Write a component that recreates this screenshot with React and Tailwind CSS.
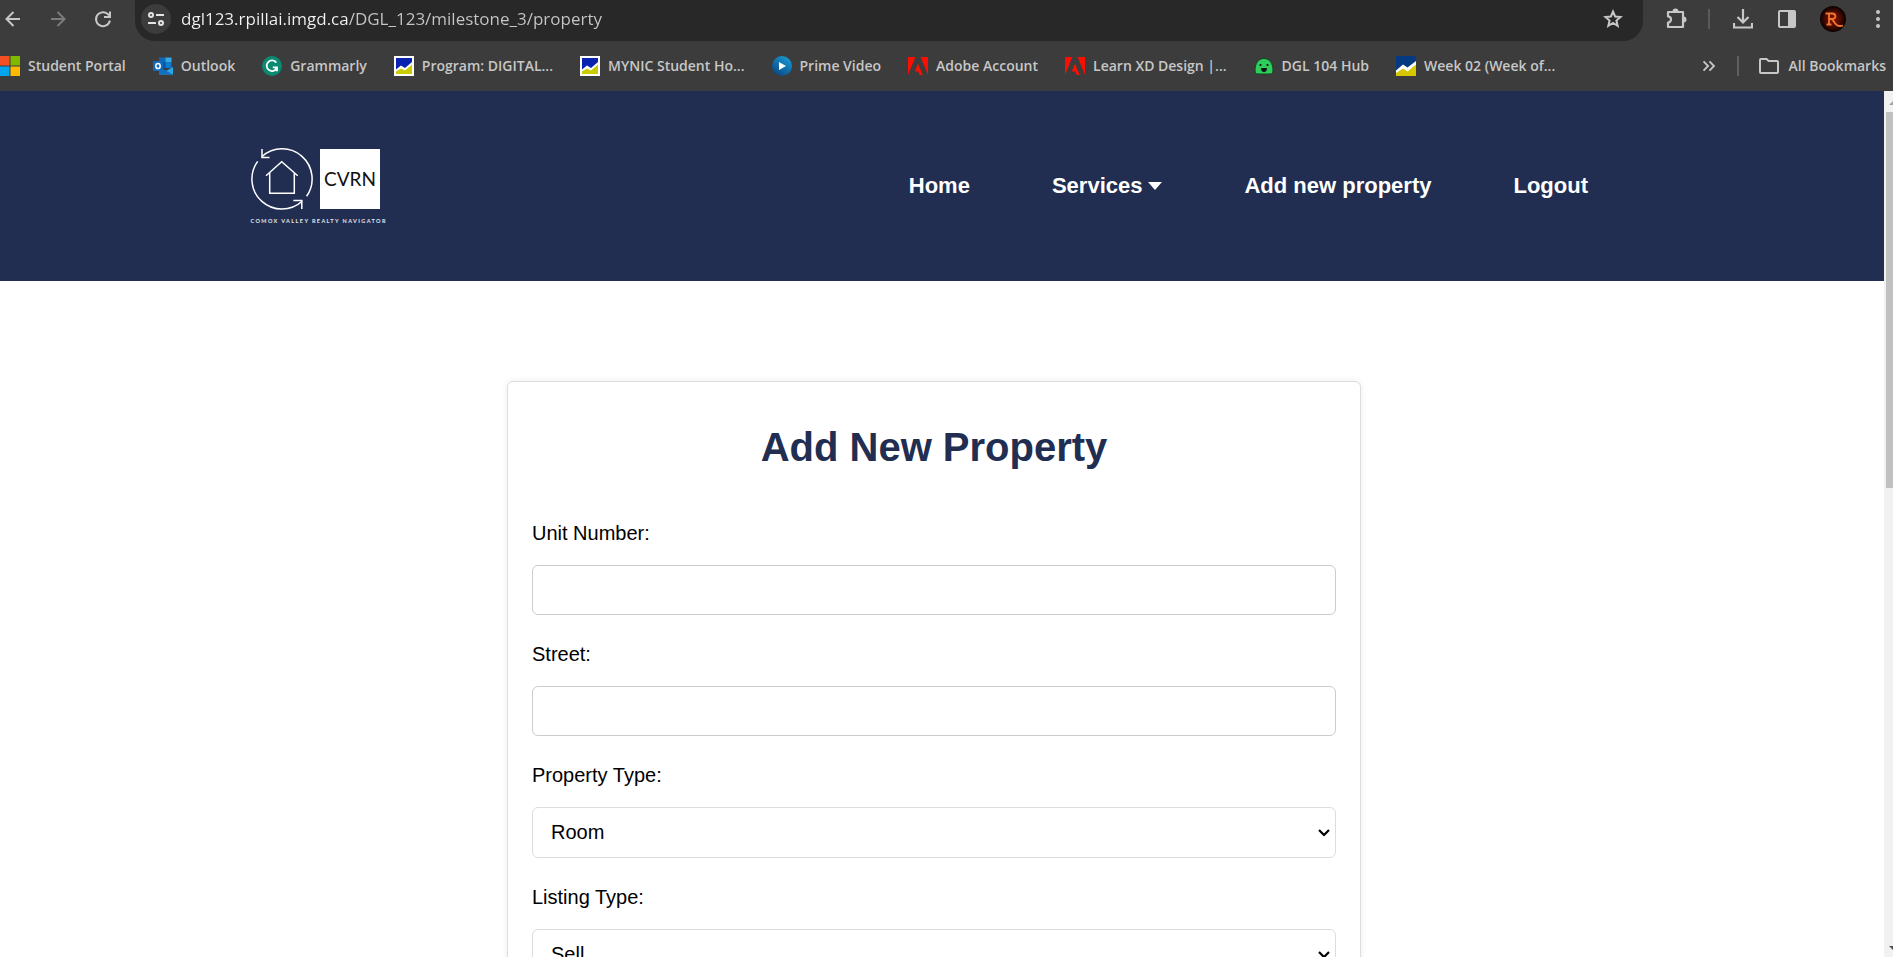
import { MdOutlineFolder } from "react-icons/md";

function MicrosoftIcon() {
  return (
    <svg viewBox="0 0 20 20" className="size-5">
      <path fill="#f25022" d="M0 0h9.5v9.5H0z" />
      <path fill="#7fba00" d="M10.5 0H20v9.5h-9.5z" />
      <path fill="#00a4ef" d="M0 10.5h9.5V20H0z" />
      <path fill="#ffb900" d="M10.5 10.5H20V20h-9.5z" />
    </svg>
  );
}

function OutlookIcon() {
  return (
    <svg viewBox="0 0 20 20" className="size-5">
      <path fill="#1066b5" d="M6 1.500h6.500v8H6z" />
      <path fill="#32a9e7" d="M12.500 1.500h6v5h-6z" />
      <path fill="#0358a7" d="M6 6h6.500v6H6z" />
      <path fill="#0a7bd0" d="M12.500 6.500h6V12h-6z" />
      <path fill="#28a8ea" d="M6 11l7 4 7-4v7.500H6z" />
      <path fill="#1270c4" d="M6 11l14 7.500H6z" />
      <rect y="5" width="10" height="10" rx="1" fill="#0f6cbd" />
      <ellipse cx="5" cy="10" rx="2.2" ry="2.6" fill="none" stroke="#fff" strokeWidth="1.5" />
    </svg>
  );
}

function GrammarlyIcon() {
  return (
    <svg viewBox="0 0 20 20" className="size-5">
      <circle cx="10" cy="10" r="10" fill="#0b8a72" />
      <path d="M14.300 6.600A5.300 5.300 0 1 0 14.800 12M10.800 11.300H15v4" fill="none" stroke="#fff" strokeWidth="1.8" />
    </svg>
  );
}

function CollegeIcon() {
  return (
    <svg viewBox="0 0 20 20" className="size-5">
      <path fill="#fff" d="M0 0h20v20H0z" />
      <path fill="#0a22b0" d="M2 2h16v4l-7 6-4-2.500-5 4z" />
      <path fill="#c8cc00" d="M2 15.500l5-3 4 2 7-6V18H2z" />
    </svg>
  );
}

function CourseIcon() {
  return (
    <svg viewBox="0 0 20 20" className="size-5">
      <path fill="#fff" d="M0 0h20v20H0z" />
      <path fill="#063a80" d="M0 0h20v5l-8.500 6.500L7 8.500l-7 6z" />
      <path fill="#d6c800" d="M0 17l7-4.500 4.500 3L20 8.500V20H0z" />
    </svg>
  );
}

function PrimeIcon() {
  return (
    <svg viewBox="0 0 20 20" className="size-5">
      <defs>
        <linearGradient id="prime" x1="1" y1="0" x2="0.300" y2="1">
          <stop offset="0" stopColor="#1ba3dc" />
          <stop offset="1" stopColor="#0b4a86" />
        </linearGradient>
      </defs>
      <circle cx="10" cy="10" r="10" fill="url(#prime)" />
      <path fill="#fff" d="M7 6l7 4-7 4z" />
    </svg>
  );
}

function AdobeIcon() {
  return (
    <svg viewBox="0 0 20 20" className="size-5">
      <path fill="#fa0f00" d="M0 1h7.400L0 19zM12.600 1H20v18zM10 7.600L14.700 19h-3.100l-1.400-3.600H6.800z" />
    </svg>
  );
}

function BlobIcon() {
  return (
    <svg viewBox="0 0 20 20" className="size-5">
      <path fill="#2ecc5a" stroke="#12431f" d="M1 14c0-6 3-11.500 9-11.500S19 8 19 14c0 3-1 4-3 4H4c-2 0-3-1-3-4z" />
      <circle cx="6.500" cy="9" r="1.100" fill="#111" />
      <circle cx="13.500" cy="9" r="1.100" fill="#111" />
      <path fill="#111" d="M7 12h6c0 2.800-1 4-3 4s-3-1.200-3-4z" />
    </svg>
  );
}

function LineIcon({ d, className = "size-[22px]" }) {
  return (
    <svg viewBox="0 0 22 22" className={className} fill="none" stroke="currentColor" strokeWidth="2">
      <path d={d} />
    </svg>
  );
}

function SiteSettingsIcon() {
  return (
    <svg viewBox="0 0 16 16" className="size-4" fill="none" stroke="#e3e3e3" strokeWidth="2">
      <circle cx="3" cy="4" r="2" />
      <path d="M8 4h8M0 12h8" />
      <circle cx="13" cy="12" r="2" />
    </svg>
  );
}

function StarIcon() {
  return (
    <svg viewBox="0 0 24 24" className="size-6" fill="none" stroke="currentColor" strokeWidth="2">
      <path d="M12 4.500l2.100 5 5.400.5-4.100 3.500 1.300 5.300L12 16l-4.700 2.800 1.300-5.300L4.500 10l5.400-.5z" />
    </svg>
  );
}

function ExtensionsIcon() {
  return (
    <svg viewBox="0 0 24 24" className="size-6">
      <path
        d="M4 5h15v15H4v-4.500a3 3 0 0 0 0-6z"
        fill="none"
        stroke="currentColor"
        strokeWidth="2.200"
        strokeLinejoin="round"
      />
      <path d="M8.500 4.500a3 3 0 0 1 6 0zM19.500 9.500a3 3 0 0 1 0 6z" fill="currentColor" />
    </svg>
  );
}

function DownloadIcon() {
  return (
    <svg viewBox="0 0 20 20" className="size-5" fill="none" stroke="currentColor" strokeWidth="2.200">
      <path d="M10 0v13M4.500 8l5.500 5.500L15.500 8M1 14v4.500h18V14" />
    </svg>
  );
}

function SidePanelIcon() {
  return (
    <svg viewBox="0 0 20 20" className="size-5">
      <rect x="2" y="2" width="16" height="16" rx="1" fill="none" stroke="currentColor" strokeWidth="2" />
      <path fill="currentColor" d="M11 2h7v16h-7z" />
    </svg>
  );
}

function ProfileIcon() {
  return (
    <svg viewBox="0 0 26 26" className="size-[26px]">
      <defs>
        <radialGradient id="ember">
          <stop offset="0" stopColor="#8a1500" />
          <stop offset="0.600" stopColor="#4a0a00" />
          <stop offset="1" stopColor="#080100" />
        </radialGradient>
      </defs>
      <circle cx="13" cy="13" r="13" fill="url(#ember)" />
      <path d="M5.500 7.500H12c4.500 0 4.500 5.500 0 5.500H9M9 7.500v11M6.500 18.500h5M12 13c3 4.500 5 8.500 11 6.500" fill="none" stroke="#f2762e" strokeWidth="1.800" />
    </svg>
  );
}

function MenuDotsIcon() {
  return (
    <svg viewBox="0 0 24 24" className="size-6" fill="currentColor">
      <circle cx="12" cy="5" r="2" />
      <circle cx="12" cy="12" r="2" />
      <circle cx="12" cy="19" r="2" />
    </svg>
  );
}

const bookmarks = [
  { label: "Student Portal", Icon: MicrosoftIcon },
  { label: "Outlook", Icon: OutlookIcon },
  { label: "Grammarly", Icon: GrammarlyIcon },
  { label: "Program: DIGITAL...", Icon: CollegeIcon },
  { label: "MYNIC Student Ho...", Icon: CollegeIcon },
  { label: "Prime Video", Icon: PrimeIcon },
  { label: "Adobe Account", Icon: AdobeIcon },
  { label: "Learn XD Design |...", Icon: AdobeIcon },
  { label: "DGL 104 Hub", Icon: BlobIcon },
  { label: "Week 02 (Week of...", Icon: CourseIcon },
];

function BrowserBar() {
  return (
    <div className="shrink-0 bg-[#3c3c3c] font-['Open_Sans',sans-serif] text-[#c7c7c7]">
      <div className="flex h-[41px] items-center">
        <div className="flex w-[135px] shrink-0 items-center gap-[23px] pb-1 pl-0.5">
          <button aria-label="Back"><LineIcon d="M18 11H4.500M11.500 4l-7 7 7 7" /></button>
          <button aria-label="Forward" className="text-[#7c7c7c]"><LineIcon d="M4 11h13.500M10.500 4l7 7-7 7" /></button>
          <button aria-label="Reload"><LineIcon d="M17 7.500A7 7 0 1 0 17.900 12.500M18 3.500v5.500h-6" /></button>
        </div>
        <div className="flex h-full flex-1 items-center rounded-b-[20px] bg-[#282828] pr-[18px] pb-1 pl-1.5">
          <button aria-label="Site information" className="flex size-[30px] items-center justify-center rounded-full bg-[#3c3c3c]">
            <SiteSettingsIcon />
          </button>
          <input
            type="text"
            aria-label="Address"
            defaultValue="dgl123.rpillai.imgd.ca/DGL_123/milestone_3/property"
            className="ml-2.5 min-w-0 flex-1 bg-[linear-gradient(90deg,#f4f4f4_167px,#c7c7c7_167px)] bg-clip-text text-[17px] leading-6 text-transparent caret-white outline-none"
          />
          <button aria-label="Bookmark this page"><StarIcon /></button>
        </div>
        <div className="flex w-[250px] shrink-0 items-center pb-1 pl-[21px]">
          <button aria-label="Extensions"><ExtensionsIcon /></button>
          <span className="ml-5 h-5 w-0.5 bg-[#5a5a5a]" />
          <button aria-label="Downloads" className="ml-[23px]"><DownloadIcon /></button>
          <button aria-label="Side panel" className="ml-6"><SidePanelIcon /></button>
          <button aria-label="Profile" className="ml-[23px]"><ProfileIcon /></button>
          <button aria-label="Menu" className="ml-5"><MenuDotsIcon /></button>
        </div>
      </div>
      <div className="flex h-[50px] items-center text-sm font-semibold">
        <nav aria-label="Bookmarks" className="flex items-center gap-[27px]">
          {bookmarks.map(({ label, Icon }) => (
            <a key={label} href="#" className="flex items-center gap-2 whitespace-nowrap">
              <Icon />
              {label}
            </a>
          ))}
        </nav>
        <div className="ml-auto flex items-center pr-[7px]">
          <button aria-label="More bookmarks">
            <LineIcon className="size-5" d="M5 6l5 5-5 5M11.500 6l5 5-5 5" />
          </button>
          <span className="ml-[18px] h-5 w-0.5 bg-[#5f5f5f]" />
          <a href="#" className="ml-[18px] flex items-center gap-2 whitespace-nowrap">
            <MdOutlineFolder className="size-6" />
            All Bookmarks
          </a>
        </div>
      </div>
    </div>
  );
}

function Logo() {
  return (
    <a href="#" aria-label="Comox Valley Realty Navigator">
      <svg viewBox="0 0 140 80" className="h-20 w-[140px]">
        <g fill="none" stroke="#fff" strokeWidth="1.500">
          <path d="M8.700 15.400A30 30 0 0 0 53.100 55.300M12.900 10.700A30 30 0 0 1 57.600 50.200" />
          <path d="M13 3v8.500h7.500M44.300 54.500h8.500V63" />
          <path d="M17 29.700l15.700-14 16 14M20.700 27v20.300h24.600V27" />
        </g>
        <rect x="71" y="3" width="60" height="60" fill="#fff" />
        <text x="101" y="40" textAnchor="middle" fontSize="19" fontFamily="Lato, sans-serif" fill="#111">CVRN</text>
        <text x="1.500" y="77" fontSize="5.500" letterSpacing="1.400" fontWeight="700" fontFamily="Lato, sans-serif" fill="#e4e6ec">COMOX VALLEY REALTY NAVIGATOR</text>
      </svg>
    </a>
  );
}

function SiteHeader() {
  return (
    <header className="flex h-[190px] items-center justify-between bg-[#212e52] pr-[296px] pl-[249px]">
      <Logo />
      <nav aria-label="Main" className="flex items-center gap-[82px] text-[22px] leading-6 font-bold text-white">
        <a href="#">Home</a>
        <a href="#" className="flex items-center gap-1.5">
          Services
          <svg viewBox="0 0 14 8" className="h-2 w-3.5"><path d="M0 0h14L7 8z" fill="currentColor" /></svg>
        </a>
        <a href="#">Add new property</a>
        <a href="#">Logout</a>
      </nav>
    </header>
  );
}

function TextField({ id, label }) {
  return (
    <div className="mb-[26px]">
      <label htmlFor={id} className="mb-[18px] block">{label}</label>
      <input id={id} type="text" className="block h-[50px] w-full rounded-md border border-[#ccc] px-[18px]" />
    </div>
  );
}

function SelectField({ id, label, options }) {
  return (
    <div className="mb-[26px]">
      <label htmlFor={id} className="mb-[18px] block">{label}</label>
      <div className="relative">
        <select id={id} className="block h-[51px] w-full appearance-none rounded-md border border-[#ddd] bg-white px-[18px]">
          {options.map((option) => (
            <option key={option}>{option}</option>
          ))}
        </select>
        <svg viewBox="0 0 12 8" className="pointer-events-none absolute top-[22px] right-1.5 h-2 w-3">
          <path d="M1 1l5 5 5-5" fill="none" stroke="#000" strokeWidth="2.200" />
        </svg>
      </div>
    </div>
  );
}

function PropertyForm() {
  return (
    <form className="mx-auto w-[854px] max-w-full rounded-md border border-[#ddd] bg-white px-6 pt-[41px] pb-6 shadow-[0_0_6px_rgba(0,0,0,0.08)]">
      <h1 className="mb-[49px] text-center text-[40px] leading-[48px] font-bold text-[#212e52]">Add New Property</h1>
      <TextField id="unit" label="Unit Number:" />
      <TextField id="street" label="Street:" />
      <SelectField id="property-type" label="Property Type:" options={["Room", "Apartment", "House"]} />
      <SelectField id="listing-type" label="Listing Type:" options={["Sell", "Rent"]} />
    </form>
  );
}

function Scrollbar() {
  return (
    <div aria-hidden="true" className="flex w-[9px] shrink-0 flex-col overflow-hidden bg-[#f1f1f1] pl-0.5">
      <svg viewBox="0 0 9 21" className="h-[21px] w-[9px] shrink-0"><path d="M3 14l5-5 5 5z" fill="#a3a3a3" /></svg>
      <div className="h-[376px] shrink-0 bg-[#c1c1c1]" />
      <svg viewBox="0 0 9 21" className="mt-auto h-[21px] w-[9px] shrink-0"><path d="M3 10h10l-5 5z" fill="#505050" /></svg>
    </div>
  );
}

export default function App() {
  return (
    <div className="flex h-screen flex-col overflow-hidden bg-white">
      <BrowserBar />
      <div className="flex min-h-0 flex-1 font-['Liberation_Sans',Arial,sans-serif] text-xl leading-[27px] text-black">
        <div className="min-w-0 flex-1 overflow-hidden">
          <SiteHeader />
          <main className="pt-[100px] pr-4">
            <PropertyForm />
          </main>
        </div>
        <Scrollbar />
      </div>
    </div>
  );
}
